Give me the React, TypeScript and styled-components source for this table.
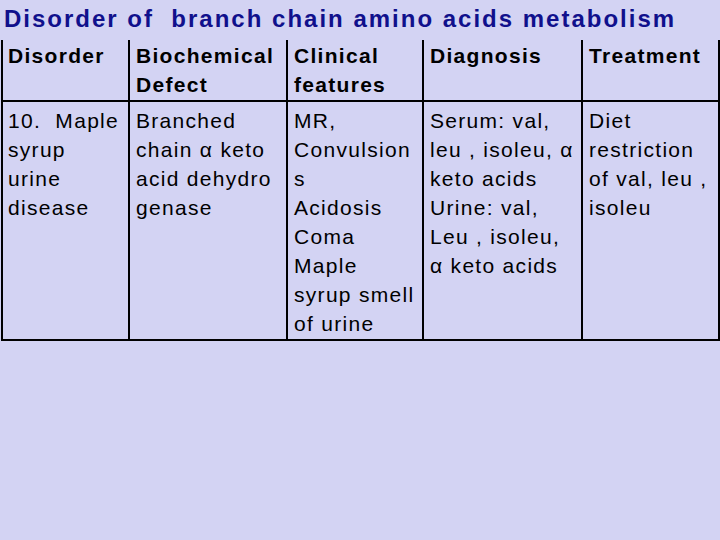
import styled, { createGlobalStyle } from 'styled-components'

const GlobalStyle = createGlobalStyle`
  html, body {
    margin: 0;
    padding: 0;
    background: #d3d3f3;
  }
  body {
    font-family: 'Liberation Sans', Arial, sans-serif;
  }
`

const Slide = styled.div`
  width: 720px;
  height: 540px;
  background: #d3d3f3;
  overflow: hidden;
`

const Title = styled.h1`
  margin: 0;
  padding: 3px 0 0 4px;
  height: 38px;
  box-sizing: border-box;
  font-size: 24px;
  line-height: 32px;
  letter-spacing: 2px;
  font-weight: bold;
  color: #10108c;
  white-space: pre;
`

const Grid = styled.div`
  display: grid;
  grid-template-columns: 129px 158px 136px 159px 137px;
  margin-left: 1px;
  margin-top: 2px;
`

const Cell = styled.div<{ $head?: boolean; $first?: boolean }>`
  box-sizing: border-box;
  border-right: 2px solid #000;
  border-left: ${(p) => (p.$first ? '2px solid #000' : 'none')};
  border-bottom: 2px solid #000;
  padding: ${(p) => (p.$head ? '1px 0 0' : '4px 0 1px')}
    ${(p) => (p.$first ? '5px' : '6px')};
  height: ${(p) => (p.$head ? '62px' : 'auto')};
  font-size: 21px;
  line-height: 29px;
  letter-spacing: 1.3px;
  font-weight: ${(p) => (p.$head ? 'bold' : 'normal')};
  color: #000;
`

const Line = styled.span`
  display: block;
  white-space: pre;
`

const header: string[][] = [
  ['Disorder'],
  ['Biochemical', 'Defect'],
  ['Clinical', 'features'],
  ['Diagnosis'],
  ['Treatment'],
]

const row: string[][] = [
  ['10.  Maple', 'syrup', 'urine', 'disease'],
  ['Branched', 'chain α keto', 'acid dehydro', 'genase'],
  ['MR,', 'Convulsion', 's', 'Acidosis', 'Coma', 'Maple', 'syrup smell', 'of urine'],
  ['Serum: val,', 'leu , isoleu, α', 'keto acids', 'Urine: val,', 'Leu , isoleu,', 'α keto acids'],
  ['Diet', 'restriction', 'of val, leu ,', 'isoleu'],
]

export default function App() {
  return (
    <Slide>
      <GlobalStyle />
      <Title>{'Disorder of  branch chain amino acids metabolism'}</Title>
      <Grid>
        {header.map((lines, i) => (
          <Cell key={'h' + i} $head $first={i === 0}>
            {lines.map((l) => (
              <Line key={l}>{l}</Line>
            ))}
          </Cell>
        ))}
        {row.map((lines, i) => (
          <Cell key={'r' + i} $first={i === 0}>
            {lines.map((l) => (
              <Line key={l}>{l}</Line>
            ))}
          </Cell>
        ))}
      </Grid>
    </Slide>
  )
}
